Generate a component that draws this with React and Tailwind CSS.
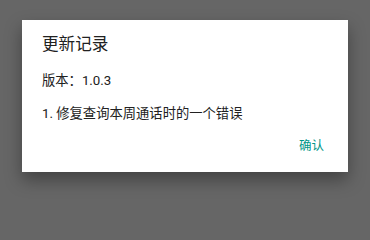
import React from 'react'

const App = () => {
  return (
    <div
      className="w-full min-h-screen h-[217px] bg-[#666666] pt-[20px] pl-[22px]"
      style={{ fontFamily: 'Roboto, "Noto Sans CJK SC", sans-serif' }}
    >
      <div className="w-[326px] h-[152px] bg-white flex flex-col shadow-[0_8px_16px_rgba(0,0,0,0.35)]">
        <h2 className="pl-[20px] pt-[14px] text-[16.6px] leading-[22px] text-[#212121]">更新记录</h2>
        <p className="pl-[20px] mt-[16px] text-[13.3px] leading-[18px] text-[#212121]">版本：1.0.3</p>
        <p className="pl-[20px] mt-[15px] text-[13.3px] leading-[18px] text-[#212121]">1. 修复查询本周通话时的一个错误</p>
        <div className="flex justify-end mt-auto pr-[24px] pb-[18px]">
          <span className="text-[12.5px] leading-[16px] text-[#009688]">确认</span>
        </div>
      </div>
    </div>
  )
}

export default App
